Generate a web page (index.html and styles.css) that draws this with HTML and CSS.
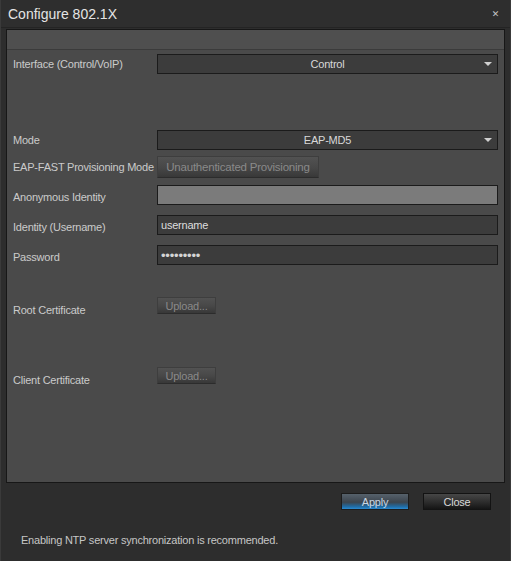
FILE: index.html
```html
<!DOCTYPE html>
<html>
<head>
<meta charset="utf-8">
<title>Configure 802.1X</title>
<link rel="stylesheet" href="styles.css">
</head>
<body>
<div class="window">
  <div class="titlebar">
    <span class="title">Configure 802.1X</span>
    <span class="close-x">&#x2715;</span>
  </div>
  <div class="content">
    <div class="panel">
      <div class="panel-head"></div>
      <div class="row row-interface">
        <div class="label">Interface (Control/VoIP)</div>
        <div class="select"><span>Control</span><i class="arrow"></i></div>
      </div>
      <div class="row row-mode">
        <div class="label">Mode</div>
        <div class="select"><span>EAP-MD5</span><i class="arrow"></i></div>
      </div>
      <div class="row row-fast">
        <div class="label">EAP-FAST Provisioning Mode</div>
        <div class="btn-disabled wide">Unauthenticated Provisioning</div>
      </div>
      <div class="row row-anon">
        <div class="label low">Anonymous Identity</div>
        <div class="input input-disabled"></div>
      </div>
      <div class="row row-ident">
        <div class="label low">Identity (Username)</div>
        <div class="input">username</div>
      </div>
      <div class="row row-pass">
        <div class="label low">Password</div>
        <div class="input pass">&#8226;&#8226;&#8226;&#8226;&#8226;&#8226;&#8226;&#8226;&#8226;</div>
      </div>
      <div class="row row-root">
        <div class="label lower">Root Certificate</div>
        <div class="btn-disabled small">Upload...</div>
      </div>
      <div class="row row-client">
        <div class="label lower">Client Certificate</div>
        <div class="btn-disabled small">Upload...</div>
      </div>
    </div>
    <div class="actions">
      <div class="btn btn-apply">Apply</div>
      <div class="btn btn-close">Close</div>
    </div>
    <div class="footer">Enabling NTP server synchronization is recommended.</div>
  </div>
</div>
</body>
</html>
```

FILE: styles.css
```css
html, body {
  margin: 0;
  padding: 0;
  background: #2c2c2c;
}
body {
  font-family: "Liberation Sans", Arial, sans-serif;
  font-size: 11px;
  letter-spacing: -0.22px;
  color: #d2d2d2;
}
.window {
  width: 511px;
  height: 561px;
  box-sizing: border-box;
  background: #2d2d2d;
  border-left: 1px solid #3a3a3a;
  border-right: 1px solid #3a3a3a;
  display: flex;
  flex-direction: column;
}
.titlebar {
  height: 28px;
  box-sizing: border-box;
  border-bottom: 1px solid #242424;
  background: #2e2e2e;
  display: flex;
  align-items: center;
  justify-content: space-between;
  padding: 0 11px 0 7px;
}
.title {
  font-size: 14px;
  letter-spacing: 0;
  color: #e4e4e4;
}
.close-x {
  font-size: 9px;
  color: #c4c4c4;
  font-family: "DejaVu Sans", sans-serif;
}
.content {
  padding: 0 5px 0 5px;
  margin-top: 1px;
  flex: 1;
  display: flex;
  flex-direction: column;
}
.panel {
  height: 454px;
  box-sizing: border-box;
  border: 1px solid #171717;
  background: #4a4a4a;
  padding: 0 6px;
}
.panel-head {
  height: 19px;
  margin: 0 -6px;
  background: #4f4f4f;
  border-bottom: 1px solid #3b3b3b;
}
.row {
  display: flex;
  align-items: center;
}
.label {
  width: 144px;
  flex: none;
  color: #cbcbcb;
  white-space: nowrap;
}
.label.low { position: relative; top: 2px; }
.label.lower { position: relative; top: 4px; }
.row-interface { margin-top: 4px; }
.row-mode { margin-top: 56px; }
.row-fast { margin-top: 6px; }
.row-anon { margin-top: 7px; }
.row-ident { margin-top: 10px; }
.row-pass { margin-top: 10px; }
.row-root { margin-top: 32px; }
.row-client { margin-top: 53px; }
.select {
  flex: 1;
  height: 20px;
  box-sizing: border-box;
  border: 1px solid #1b1b1b;
  background: #3c3c3c;
  color: #d8d8d8;
  display: flex;
  align-items: center;
  justify-content: center;
  position: relative;
}
.arrow {
  position: absolute;
  right: 5px;
  top: 7px;
  width: 0;
  height: 0;
  border-left: 4px solid transparent;
  border-right: 4px solid transparent;
  border-top: 4px solid #d0d0d0;
}
.input {
  flex: 1;
  height: 20px;
  box-sizing: border-box;
  border: 1px solid #1b1b1b;
  background: #3c3c3c;
  color: #dedede;
  padding: 0 3px;
  display: flex;
  align-items: center;
}
.input-disabled {
  background: #7b7b7b;
}
.pass {
  font-size: 13px;
  letter-spacing: -0.2px;
  color: #d4d4d4;
}
.btn-disabled {
  box-sizing: border-box;
  background: linear-gradient(#525252, #474747 55%, #383838);
  border: 1px solid #3e3e3e;
  border-bottom-color: #2c2c2c;
  color: #8a8a8a;
  display: flex;
  align-items: center;
  justify-content: center;
}
.btn-disabled.wide {
  width: 162px;
  height: 22px;
  font-size: 11.5px;
}
.btn-disabled.small {
  width: 59px;
  height: 17px;
}
.actions {
  display: flex;
  justify-content: flex-end;
  gap: 14px;
  padding-right: 14px;
  margin-top: 10px;
}
.btn {
  width: 68px;
  height: 17px;
  box-sizing: border-box;
  display: flex;
  align-items: center;
  justify-content: center;
  font-size: 11px;
}
.btn-apply {
  background: linear-gradient(#56616b, #3c454e 55%, #1f6da8 85%, #2b8ad0);
  border: 1px solid #1c1c1c;
  color: #c8d6e4;
}
.btn-close {
  background: linear-gradient(#474747, #2c2c2c 55%, #151515);
  border: 1px solid #131313;
  color: #d8d8d8;
}
.footer {
  margin-top: 24px;
  padding-left: 15px;
  color: #c6c6c6;
}
```
